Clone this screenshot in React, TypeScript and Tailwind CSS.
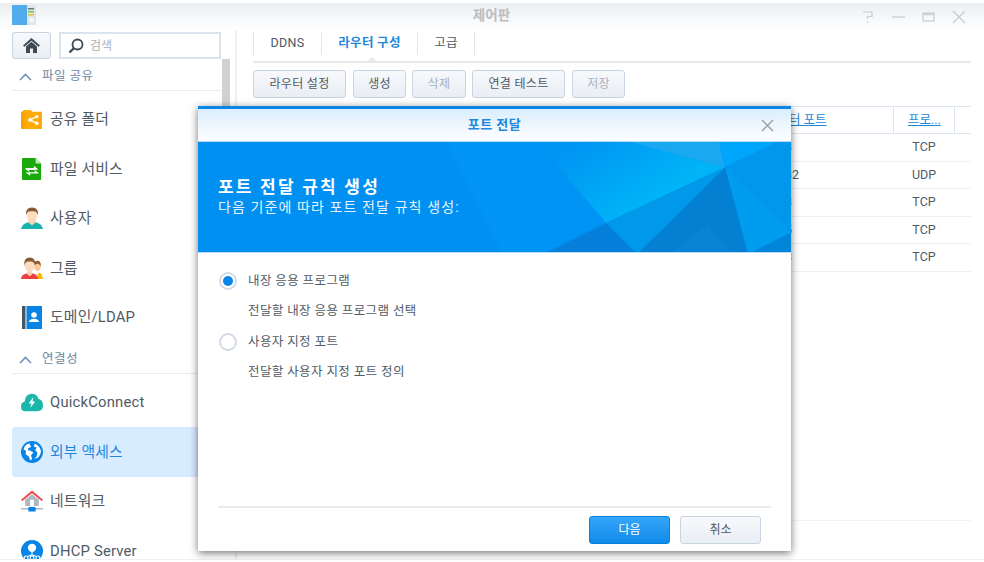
import React from "react";

const font = "font-['Roboto','Noto_Sans_CJK_KR',sans-serif]";

const FolderIcon = () => (
  <svg width="23" height="20" viewBox="0 0 24 21">
    <path d="M0 4 L3 1 L3 21 L1 21 Q0 21 0 20Z" fill="#f59c00" />
    <path d="M3 1 H10 L12 3 H22 V21 H3Z" fill="#ffab0a" />
    <g stroke="#fff" strokeWidth="1.4">
      <path d="M16.5 8 L9.5 11.5 L16.5 15" fill="none" />
    </g>
    <circle cx="9.5" cy="11.5" r="2" fill="#fff" />
    <circle cx="16.5" cy="8" r="1.8" fill="#fff" />
    <circle cx="16.5" cy="15" r="1.8" fill="#fff" />
  </svg>
);
const FileIcon = () => (
  <svg width="20" height="22" viewBox="0 0 22 24">
    <path d="M1 0 H15 L21 6 V23 Q21 24 20 24 H1 Q0 24 0 23 V1 Q0 0 1 0Z" fill="#19a90b" />
    <path d="M15 0 V6 H21Z" fill="#bfe8ba" />
    <path d="M4 11 H13 V8.5 L18 12.5 L14 13 H8 V15 L3.5 12Z" fill="#fff" />
    <path d="M18 17 H9 V19.5 L4 15.8 L8 15.5 H14 V13.5 L18.5 16.5Z" fill="#fff" />
  </svg>
);
const UserIcon = () => (
  <svg width="22" height="22" viewBox="0 0 24 24">
    <path d="M0 24 Q1 18 8 16.5 H16 Q23 18 24 24Z" fill="#17b3ae" />
    <path d="M8 13 H16 V17 L12 20 L8 17Z" fill="#f9d3b0" />
    <ellipse cx="12" cy="8.5" rx="6" ry="7.5" fill="#fbdcc0" />
    <path d="M5.5 9 Q4.5 0.5 12 0.5 Q19.5 0.5 18.5 9 Q17.5 4.5 14 4.5 H10 Q6.5 4.5 5.5 9Z" fill="#8a5a32" />
  </svg>
);
const GroupIcon = () => (
  <svg width="22" height="22" viewBox="0 0 24 24">
    <ellipse cx="18" cy="10" rx="3.6" ry="5.5" fill="#f5c998" />
    <path d="M14 9 Q14 4 18 4 Q22 4 21.5 10 Q20 7 18 7Z" fill="#8a5a32" />
    <path d="M18 24 Q18 18 20 17 Q23 18 24 24Z" fill="#ffb400" />
    <path d="M0 24 Q0.5 19 6 18 H13 Q18 19 19 24Z" fill="#ee4040" />
    <path d="M7 14 H12 V19 L9.5 21 L7 19Z" fill="#f9d3b0" />
    <ellipse cx="9.5" cy="9" rx="5.5" ry="7" fill="#fbdcc0" />
    <path d="M3.5 10 Q2.5 0.5 9.5 0.5 Q16.5 0.5 15.5 10 Q14.5 5 11 5 H8 Q4.5 5 3.5 10Z" fill="#8a5a32" />
  </svg>
);
const DomainIcon = () => (
  <svg width="20" height="23" viewBox="0 0 20 23">
    <rect x="0" y="0" width="3.5" height="23" fill="#4b5663" />
    <rect x="4.5" y="0" width="15.5" height="23" fill="#0784e6" />
    <circle cx="12" cy="9" r="2.8" fill="#fff" />
    <path d="M6.8 16 Q8 12.8 12 12.8 Q16 12.8 17.2 16Z" fill="#fff" />
  </svg>
);
const CloudIcon = () => (
  <svg width="22" height="19" viewBox="0 0 24 20">
    <path d="M5 19.5 Q0 19.5 0 14.5 Q0 10 4 9 Q4.5 1 11.5 0.5 Q17.5 0.5 19 6 Q24 7.5 24 13 Q24 19.5 18 19.5Z" fill="#1ab7a8" />
    <path d="M13.5 4 L8.5 11 H11.5 L10 16 L15.5 9 H12.5Z" fill="#fff" />
  </svg>
);
const GlobeIcon = () => (
  <svg width="22" height="22" viewBox="0 0 24 24">
    <circle cx="12" cy="12" r="12" fill="#0784e6" />
    <path d="M9 2.5 Q4 4 2.8 9 L5.5 11 L5 14.5 L8.5 17 L10 21 L12 20 L11 15.5 L13.5 12.5 L9.5 10 L7.5 10.5 L8 7.5 L11 6.5Z" fill="#fff" />
    <path d="M15 2.8 L14 6 L17 7 L15.5 10 L18 12.5 L17 17 L14.5 19.5 Q21 18.5 21.8 11.5 Q21 5.5 15 2.8Z" fill="#fff" />
  </svg>
);
const NetIcon = () => (
  <svg width="22" height="22" viewBox="0 0 24 23">
    <path d="M12 0 L24 10 L22.5 11.5 L12 3 L1.5 11.5 L0 10Z" fill="#ef4b4b" />
    <path d="M4.5 10 L12 4 L19.5 10 V17 H4.5Z" fill="#aeb9c4" />
    <rect x="10" y="10" width="4" height="7" fill="#fff" />
    <rect x="0" y="19.5" width="24" height="1.2" fill="#8ba0b5" />
    <rect x="8" y="18" width="8" height="5" rx="1" fill="#0784e6" />
  </svg>
);
const DhcpIcon = () => (
  <svg width="22" height="22" viewBox="0 0 24 24">
    <circle cx="12" cy="12" r="12" fill="#0784e6" />
    <circle cx="12" cy="8.5" r="4.5" fill="#fff" />
    <path d="M12 13 V17 M12 16 L6 18.5 M12 16 L18 18.5" stroke="#fff" strokeWidth="1.2" />
    <g fill="#0784e6" stroke="#fff" strokeWidth="1.2">
      <circle cx="5.5" cy="19.5" r="2" />
      <circle cx="12" cy="19.5" r="2" />
      <circle cx="18.5" cy="19.5" r="2" />
    </g>
  </svg>
);

const Chevron = () => (
  <svg width="13" height="8" viewBox="0 0 13 8" fill="none">
    <path d="M1 7 L6.5 1.5 L12 7" stroke="#6f93b8" strokeWidth="1.6" />
  </svg>
);

const Section = ({ label, cls }: { label: string; cls: string }) => (
  <div className={`flex items-center h-[28px] pl-[7px] gap-[10px] border-b border-[#e6ebf0] text-[12.5px] text-[#6d89a8] ${cls}`}>
    <Chevron />
    <span className="tracking-[0.5px]">{label}</span>
  </div>
);

const Item = ({ icon, label, active }: { icon: React.ReactNode; label: string; active?: boolean }) => (
  <div
    className={`flex items-center h-[49.5px] shrink-0 rounded-[3px] text-[14.8px] leading-[18px] ${
      active ? "bg-[#d8ecff] text-[#1f87dc]" : "text-[#505a64]"
    }`}
  >
    <span className="w-[38px] flex justify-center pl-[2px] shrink-0">{icon}</span>
    <span className="tracking-[0.2px]">{label}</span>
  </div>
);

const Btn = ({ w, label, off }: { w: string; label: string; off?: boolean }) => (
  <div
    className={`${w} h-[28px] flex items-center justify-center rounded-[3px] border border-[#c8d4e0] bg-gradient-to-b from-[#f7f9fc] to-[#e9eef4] text-[12px] tracking-[0.3px] ${
      off ? "text-[#a9b1b9]" : "text-[#505a64]"
    }`}
  >
    {label}
  </div>
);

const Tab = ({ w, label, active }: { w: string; label: string; active?: boolean }) => (
  <div
    className={`${w} h-[23px] flex items-center justify-center border-r border-[#dfe6ed] text-[12.5px] tracking-[0.3px] ${
      active ? "text-[#1f87dc] font-semibold" : "text-[#505a64]"
    }`}
  >
    {label}
  </div>
);

const rows = [
  ["5443", "TCP"],
  ["12032", "UDP"],
  ["5003", "TCP"],
  ["5005", "TCP"],
  ["5443", "TCP"],
];

const Radio = ({ on }: { on?: boolean }) => (
  <span className="w-[18px] h-[18px] rounded-full border-2 border-[#d3dce6] bg-white flex items-center justify-center shrink-0">
    {on && <span className="w-[10px] h-[10px] rounded-full bg-[#0a86ea]" />}
  </span>
);

const Banner = () => (
  <svg className="absolute inset-0" width="593" height="112" viewBox="0 0 593 111" preserveAspectRatio="none">
    <defs>
      <linearGradient id="bright" gradientUnits="userSpaceOnUse" x1="375" y1="0" x2="425" y2="78">
        <stop offset="0" stopColor="#0094f3" />
        <stop offset="1" stopColor="#00b4f6" />
      </linearGradient>
    </defs>
    <polygon points="249,0 339,0 408,80 345,111 304,111" fill="#0094f4" />
    <polygon points="339,0 432,0 527,25 408,80" fill="url(#bright)" />
    <polygon points="432,0 521,0 527,25" fill="#1aa9f1" />
    <polygon points="521,0 579,0 527,25" fill="#00a6fb" />
    <polygon points="527,25 579,0 593,0 593,90" fill="#0097ec" />
    <polygon points="527,25 593,90 550,111" fill="#009cf0" />
    <polygon points="593,90 593,111 550,111" fill="#0086d8" />
    <polygon points="527,25 439,111 550,111" fill="#0480d2" />
    <polygon points="472,111 510,82 535,111" fill="#0784d6" />
    <polygon points="527,25 408,80 439,111" fill="#0099e9" />
    <polygon points="408,80 345,111 439,111" fill="#0480dc" />
  </svg>
);

export default function App() {
  return (
    <div className={`relative w-[984px] h-[562px] overflow-hidden bg-white pt-[3px] ${font}`}>
      {/* title bar */}
      <div className="h-[27px] flex items-center bg-gradient-to-b from-[#eceff2] to-white pl-[12px] pr-[18px]">
        <svg width="24" height="20" viewBox="0 0 24 20" className="mb-[4px]">
          <rect width="15" height="20" fill="#52abea" />
          <rect x="15" width="9" height="20" fill="#dfe5ea" />
          <rect x="16" y="3" width="6" height="1.5" fill="#6b7782" />
          <rect x="16" y="6" width="6" height="1.5" fill="#7cc33e" />
          <rect x="16" y="9" width="6" height="1.5" fill="#e8c23a" />
          <circle cx="19.5" cy="15" r="2.5" fill="#f5f7f8" />
        </svg>
        <div className="flex-1 text-center pl-[116px] pb-[2px] text-[13.5px] font-semibold text-[#b9bdc1] ml-[-2px] mr-[28px]">제어판</div>
        <div className="flex items-center gap-[17px] text-[#c7ccd1]">
          <svg width="14" height="12" viewBox="0 0 14 12" fill="none" stroke="currentColor" strokeWidth="1.2"><path d="M2 1 H11 V5.5 H6.5 V8" /><path d="M6.5 10 V11.5" /></svg>
          <svg width="13" height="12" viewBox="0 0 13 12" fill="none" stroke="currentColor" strokeWidth="1.3"><path d="M0 6 H13" /></svg>
          <svg width="13" height="12" viewBox="0 0 13 12" fill="none" stroke="currentColor" strokeWidth="1.2"><rect x="1" y="2" width="11" height="8" /><path d="M1 3.5 H12" /></svg>
          <svg width="14" height="14" viewBox="0 0 14 14" fill="none" stroke="currentColor" strokeWidth="1.3"><path d="M1 1 L13 13 M13 1 L1 13" /></svg>
        </div>
      </div>

      {/* body */}
      <div className="flex h-[530px] border-b border-[#eef0f3]">
        {/* sidebar */}
        <div className="w-[237px] shrink-0 flex pl-[12px] border-r-2 border-[#eef1f4] overflow-hidden">
          <div className="w-[209px] shrink-0 flex flex-col">
            <div className="flex items-center gap-[8px] mt-[2px] h-[27px] shrink-0">
              <div className="w-[39px] h-[27px] rounded-[3px] border border-[#c8d4e0] bg-gradient-to-b from-[#f7f9fc] to-[#e9eef4] flex items-center justify-center">
                <svg width="17" height="15" viewBox="0 0 17 15">
                  <path d="M8.5 0 L17 7.5 L15.5 8.8 L8.5 2.8 L1.5 8.8 L0 7.5Z" fill="#3f4954" />
                  <path d="M3 8.5 L8.5 3.8 L14 8.5 V15 H10 V10.5 H7 V15 H3Z" fill="#3f4954" />
                </svg>
              </div>
              <div className="flex-1 h-[27px] border-2 border-[#dbe3ec] bg-white flex items-center pl-[7px] gap-[6px] text-[12px] text-[#a9b1b9]">
                <svg width="16" height="16" viewBox="0 0 16 16" fill="none">
                  <circle cx="9.5" cy="6.5" r="5" stroke="#3f4954" strokeWidth="1.8" />
                  <path d="M6 10 L1.5 14.5" stroke="#3f4954" strokeWidth="2.4" />
                </svg>
                <span>검색</span>
              </div>
            </div>
            <Section label="파일 공유" cls="mt-[4px] shrink-0" />
            <div className="flex flex-col mt-[3.5px]">
              <Item icon={<FolderIcon />} label="공유 폴더" />
              <Item icon={<FileIcon />} label="파일 서비스" />
              <Item icon={<UserIcon />} label="사용자" />
              <Item icon={<GroupIcon />} label="그룹" />
              <Item icon={<DomainIcon />} label="도메인/LDAP" />
            </div>
            <Section label="연결성" cls="mt-[4px] shrink-0" />
            <div className="flex flex-col mt-[3.5px]">
              <Item icon={<CloudIcon />} label="QuickConnect" />
              <Item icon={<GlobeIcon />} label="외부 액세스" active />
              <Item icon={<NetIcon />} label="네트워크" />
              <Item icon={<DhcpIcon />} label="DHCP Server" />
            </div>
          </div>
          <div className="w-[8px] h-[240px] ml-[1px] mt-[29px] bg-[#cfd1d3] shrink-0" />
        </div>

        {/* content */}
        <div className="flex-1 flex flex-col pl-[16px] pr-[13px]">
          <div className="relative flex border-b-2 border-[#e6e8ea] h-[33px] pt-[2px] shrink-0">
            <div className="flex h-[23px] border-l border-[#dfe6ed]">
              <Tab w="w-[68px]" label="DDNS" />
              <Tab w="w-[96px]" label="라우터 구성" active />
              <Tab w="w-[57px]" label="고급" />
            </div>
            <span className="absolute left-[113px] bottom-[-2px] w-0 h-0 border-l-[6px] border-r-[6px] border-b-[6px] border-l-transparent border-r-transparent border-b-[#e6e8ea]" />
          </div>
          <div className="flex mt-[7px] shrink-0">
            <Btn w="w-[93px]" label="라우터 설정" />
            <div className="w-[7px] shrink-0" />
            <Btn w="w-[53px]" label="생성" />
            <div className="w-[6px] shrink-0" />
            <Btn w="w-[54px]" label="삭제" off />
            <div className="w-[6px] shrink-0" />
            <Btn w="w-[93px]" label="연결 테스트" />
            <div className="w-[7px] shrink-0" />
            <Btn w="w-[53px]" label="저장" off />
          </div>
          <div className="mt-[8px] grid grid-cols-[499px_142px_61px_16px] h-[28px] shrink-0 border-y border-[#dbe6f1] text-[12.5px] text-[#1f87dc]">
            <div className="border-r border-[#dbe6f1]" />
            <div className="border-r border-[#dbe6f1] pl-[14px] flex items-center underline">라우터 포트</div>
            <div className="border-r border-[#dbe6f1] pl-[14px] flex items-center underline">프로...</div>
            <div />
          </div>
          {rows.map(([port, proto], i) => (
            <div key={i} className="grid grid-cols-[499px_142px_61px_16px] h-[27.6px] shrink-0 border-b border-[#edf1f6] text-[12.5px] text-[#505a64]">
              <div />
              <div className="pl-[12px] flex items-center">{port}</div>
              <div className="flex items-center justify-center pr-[1px]">{proto}</div>
              <div />
            </div>
          ))}
          <div className="mt-[248px] border-b border-[#eef3f8] shrink-0" />
        </div>
      </div>

      {/* modal */}
      <div className="absolute left-[198px] top-[106px] w-[593px] h-[445px] bg-white border-t-[3px] border-[#0a86e6] shadow-[0_2px_8px_rgba(0,0,0,0.55)] flex flex-col">
        <div className="relative h-[32px] shrink-0 bg-gradient-to-b from-[#daedfc] to-white flex items-center justify-center text-[13px] font-semibold text-[#1f87dc] tracking-[0.5px]">
          포트 전달
          <svg className="absolute right-[17px] top-[10px]" width="13" height="13" viewBox="0 0 13 13" fill="none" stroke="#9aa3ab" strokeWidth="1.5"><path d="M1 1 L12 12 M12 1 L1 12" /></svg>
        </div>
        <div className="relative h-[112px] shrink-0 bg-[#0090f2] border-y border-[#bcdcf5] overflow-hidden">
          <Banner />
          <div className="relative pl-[20px] pt-[34px] text-white">
            <div className="text-[17px] font-bold leading-[23px] tracking-[2.2px]">포트 전달 규칙 생성</div>
            <div className="text-[14px] leading-[17px] tracking-[1.1px] text-[#e4f3ff]">다음 기준에 따라 포트 전달 규칙 생성:</div>
          </div>
        </div>
        <div className="flex-1 pl-[21px] pt-[19px] text-[12.5px] text-[#505a64] tracking-[0.4px]">
          <div className="flex items-center gap-[11px] h-[18px]"><Radio on /><span>내장 응용 프로그램</span></div>
          <div className="pl-[29px] mt-[12px] h-[18px] flex items-center">전달할 내장 응용 프로그램 선택</div>
          <div className="flex items-center gap-[11px] h-[18px] mt-[13px]"><Radio /><span>사용자 지정 포트</span></div>
          <div className="pl-[29px] mt-[12px] h-[18px] flex items-center">전달할 사용자 지정 포트 정의</div>
        </div>
        <div className="mx-[20px] border-t-2 border-[#e8eaec] h-[45px] shrink-0 flex justify-end items-start pt-[8px] gap-[10px] pr-[10px]">
          <div className="w-[81px] h-[28px] rounded-[3px] border border-[#0a7fd8] bg-gradient-to-b from-[#33a6f8] to-[#0f8aea] text-white text-[12px] flex items-center justify-center">다음</div>
          <div className="w-[81px] h-[28px] rounded-[3px] border border-[#c8d4e0] bg-gradient-to-b from-[#f7f9fc] to-[#e9eef4] text-[#505a64] text-[12px] flex items-center justify-center">취소</div>
        </div>
      </div>
    </div>
  );
}
